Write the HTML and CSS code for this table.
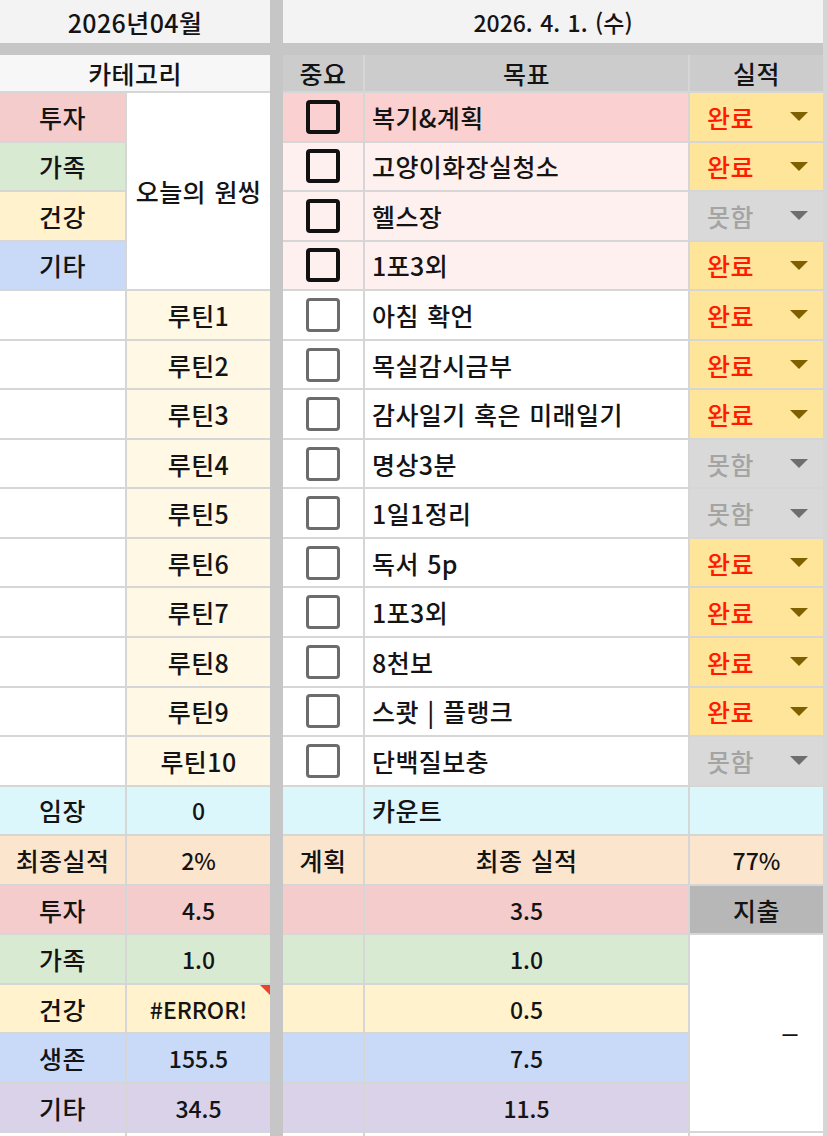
FILE: index.html
```html
<!DOCTYPE html>
<html lang="ko">
<head>
<meta charset="utf-8">
<title>2026년04월</title>
<link rel="stylesheet" href="styles.css">
</head>
<body>
<div class="sheet">
  <div class="sep-col"></div>
  <div class="sep-row"></div>

  <div class="cell title span2">2026년04월</div>
  <div class="cell title span3 num">2026. 4. 1. (수)</div>

  <div class="cell head-light span2">카테고리</div>
  <div class="cell head">중요</div>
  <div class="cell head">목표</div>
  <div class="cell head">실적</div>

  <!-- 원씽 rows -->
  <div class="cell pink">투자</div>
  <div class="cell white onething">오늘의 원씽</div>
  <div class="cell rose"><span class="check strong"></span></div>
  <div class="cell rose goal">복기&amp;계획</div>
  <div class="cell dd done"><span>완료</span><i class="arrow"></i></div>

  <div class="cell green">가족</div>
  <div class="cell blush"><span class="check strong"></span></div>
  <div class="cell blush goal">고양이화장실청소</div>
  <div class="cell dd done"><span>완료</span><i class="arrow"></i></div>

  <div class="cell yellow">건강</div>
  <div class="cell blush"><span class="check strong"></span></div>
  <div class="cell blush goal">헬스장</div>
  <div class="cell dd miss"><span>못함</span><i class="arrow"></i></div>

  <div class="cell blue">기타</div>
  <div class="cell blush"><span class="check strong"></span></div>
  <div class="cell blush goal">1포3외</div>
  <div class="cell dd done"><span>완료</span><i class="arrow"></i></div>

  <!-- routines -->
  <div class="cell white"></div>
  <div class="cell cream">루틴1</div>
  <div class="cell white"><span class="check soft"></span></div>
  <div class="cell white goal">아침 확언</div>
  <div class="cell dd done"><span>완료</span><i class="arrow"></i></div>

  <div class="cell white"></div>
  <div class="cell cream">루틴2</div>
  <div class="cell white"><span class="check soft"></span></div>
  <div class="cell white goal">목실감시금부</div>
  <div class="cell dd done"><span>완료</span><i class="arrow"></i></div>

  <div class="cell white"></div>
  <div class="cell cream">루틴3</div>
  <div class="cell white"><span class="check soft"></span></div>
  <div class="cell white goal">감사일기 혹은 미래일기</div>
  <div class="cell dd done"><span>완료</span><i class="arrow"></i></div>

  <div class="cell white"></div>
  <div class="cell cream">루틴4</div>
  <div class="cell white"><span class="check soft"></span></div>
  <div class="cell white goal">명상3분</div>
  <div class="cell dd miss"><span>못함</span><i class="arrow"></i></div>

  <div class="cell white"></div>
  <div class="cell cream">루틴5</div>
  <div class="cell white"><span class="check soft"></span></div>
  <div class="cell white goal">1일1정리</div>
  <div class="cell dd miss"><span>못함</span><i class="arrow"></i></div>

  <div class="cell white"></div>
  <div class="cell cream">루틴6</div>
  <div class="cell white"><span class="check soft"></span></div>
  <div class="cell white goal">독서 5p</div>
  <div class="cell dd done"><span>완료</span><i class="arrow"></i></div>

  <div class="cell white"></div>
  <div class="cell cream">루틴7</div>
  <div class="cell white"><span class="check soft"></span></div>
  <div class="cell white goal">1포3외</div>
  <div class="cell dd done"><span>완료</span><i class="arrow"></i></div>

  <div class="cell white"></div>
  <div class="cell cream">루틴8</div>
  <div class="cell white"><span class="check soft"></span></div>
  <div class="cell white goal">8천보</div>
  <div class="cell dd done"><span>완료</span><i class="arrow"></i></div>

  <div class="cell white"></div>
  <div class="cell cream">루틴9</div>
  <div class="cell white"><span class="check soft"></span></div>
  <div class="cell white goal">스쾃 | 플랭크</div>
  <div class="cell dd done"><span>완료</span><i class="arrow"></i></div>

  <div class="cell white"></div>
  <div class="cell cream">루틴10</div>
  <div class="cell white"><span class="check soft"></span></div>
  <div class="cell white goal">단백질보충</div>
  <div class="cell dd miss"><span>못함</span><i class="arrow"></i></div>

  <!-- summary -->
  <div class="cell cyan">임장</div>
  <div class="cell cyan num">0</div>
  <div class="cell cyan"></div>
  <div class="cell cyan goal">카운트</div>
  <div class="cell cyan"></div>

  <div class="cell peach">최종실적</div>
  <div class="cell peach num">2%</div>
  <div class="cell peach">계획</div>
  <div class="cell peach">최종 실적</div>
  <div class="cell peach num">77%</div>

  <div class="cell pink">투자</div>
  <div class="cell pink num">4.5</div>
  <div class="cell pink"></div>
  <div class="cell pink num">3.5</div>
  <div class="cell expense">지출</div>

  <div class="cell green">가족</div>
  <div class="cell green num">1.0</div>
  <div class="cell green"></div>
  <div class="cell green num">1.0</div>
  <div class="cell white amount">–</div>

  <div class="cell yellow">건강</div>
  <div class="cell yellow num error">#ERROR!</div>
  <div class="cell yellow"></div>
  <div class="cell yellow num">0.5</div>

  <div class="cell blue">생존</div>
  <div class="cell blue num">155.5</div>
  <div class="cell blue"></div>
  <div class="cell blue num">7.5</div>

  <div class="cell purple">기타</div>
  <div class="cell purple num">34.5</div>
  <div class="cell purple"></div>
  <div class="cell purple num">11.5</div>

  <div class="cell white"></div>
  <div class="cell white"></div>
  <div class="cell white"></div>
  <div class="cell white"></div>
  <div class="cell white"></div>
</div>
</body>
</html>
```

FILE: styles.css
```css
html, body {
  margin: 0;
  padding: 0;
  background: #d6d6d6;
}

body {
  width: 827px;
  height: 1136px;
  overflow: hidden;
  font-family: "Noto Sans CJK KR", "Noto Sans", sans-serif;
}

.sheet {
  display: grid;
  grid-template-columns: 125px 143px 9px 80px 323px 133px;
  grid-template-rows: 43px 8px 36px repeat(21, 47.55px) 40px;
  gap: 2px;
  width: 827px;
  height: 1136px;
  background: #d6d6d6;
}

.sep-col {
  grid-column: 3;
  grid-row: 1 / -1;
  margin: 0 -2px;
  background: #c6c6c6;
}

.sep-row {
  grid-column: 1 / -1;
  grid-row: 2;
  margin: -2px 0;
  background: #c6c6c6;
}

.cell {
  display: flex;
  align-items: center;
  justify-content: center;
  position: relative;
  font-size: 25px;
  font-weight: 500;
  color: #141414;
  letter-spacing: 0.4px;
  word-spacing: 1px;
  white-space: nowrap;
  overflow: hidden;
  min-width: 0;
}

.cell.num {
  font-size: 23px;
  letter-spacing: 0;
}

.span2 { grid-column: span 2; }
.span3 { grid-column: span 3; }

.title { background: #f3f3f3; }
.head-light { background: #f7f7f7; }
.head { background: #cccccc; }

.onething { grid-row: span 4; }
.amount {
  grid-row: span 4;
  justify-content: flex-end;
  padding-right: 25px;
  font-family: "Liberation Sans", sans-serif;
  font-size: 27px;
  font-weight: 400;
}

.goal {
  justify-content: flex-start;
  padding-left: 7px;
}

.white { background: #ffffff; }
.pink { background: #f4cccc; }
.green { background: #d9ead3; }
.yellow { background: #fff2cc; }
.blue { background: #c9daf8; }
.purple { background: #d9d2e9; }
.peach { background: #fce5cd; }
.cyan { background: #dcf7fc; }
.cream { background: #fef8e4; }
.rose { background: #fbd0d0; }
.blush { background: #fff0f0; }
.expense { background: #b7b7b7; }

.check {
  display: block;
  width: 34px;
  height: 34px;
  box-sizing: border-box;
  border-radius: 4px;
}
.check.strong { border: 4px solid #111111; }
.check.soft { border: 3.5px solid #6c6c6c; }

.dd {
  justify-content: space-between;
  padding: 0 15px 0 17px;
}
.dd.done { background: #ffe599; color: #ff1a00; }
.dd.miss { background: #d9d9d9; color: #a4a4a4; }

.arrow {
  display: block;
  width: 0;
  height: 0;
  border-left: 9px solid transparent;
  border-right: 9px solid transparent;
  border-top: 9px solid #7f6000;
}
.dd.miss .arrow { border-top-color: #6e6e6e; }

.error::after {
  content: "";
  position: absolute;
  top: 0;
  right: 0;
  width: 0;
  height: 0;
  border-top: 10px solid #e8452c;
  border-left: 10px solid transparent;
}
```
